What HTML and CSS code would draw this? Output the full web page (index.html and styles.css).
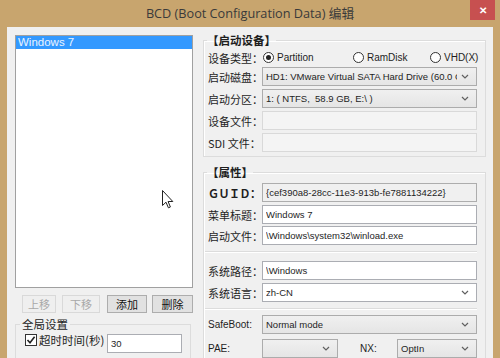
FILE: index.html
```html
<!DOCTYPE html>
<html>
<head>
<meta charset="utf-8">
<link rel="stylesheet" href="styles.css">
</head>
<body>
<div class="app">
  <div class="titlebar">
    <span></span>
    <div class="title">BCD (Boot Configuration Data) 编辑</div>
    <div class="close">✕</div>
  </div>
  <div class="window">
    <div class="left">
      <div class="listbox">
        <div class="item sel">Windows 7</div>
      </div>
      <div class="btnrow">
        <div class="btn dis b1">上移</div>
        <div class="btn dis b2">下移</div>
        <div class="btn b3">添加</div>
        <div class="btn b4">删除</div>
      </div>
      <fieldset class="gbox">
        <legend>全局设置</legend>
        <div class="crow">
          <span class="check"><svg width="10" height="10" viewBox="0 0 10 10"><polyline points="1.5,5 4,7.8 8.6,1.8" fill="none" stroke="#222" stroke-width="1.6"/></svg></span>
          <span class="clabel">超时时间(秒)</span>
          <div class="field white tfield"><span class="val">30</span></div>
        </div>
      </fieldset>
    </div>
    <div class="right">
      <fieldset class="group g1">
        <legend>【启动设备】</legend>
        <div class="row r0">
          <span class="lbl">设备类型：</span>
          <span class="radio on"></span><span class="rtext rt1">Partition</span>
          <span class="radio"></span><span class="rtext rt2">RamDisk</span>
          <span class="radio"></span><span class="rtext">VHD(X)</span>
        </div>
        <div class="row">
          <span class="lbl">启动磁盘：</span>
          <div class="field combo"><span class="val">HD1: VMware Virtual SATA Hard Drive (60.0 GB)</span><svg class="chev" width="8" height="5" viewBox="0 0 8 5"><polyline points="1,1 4,4 7,1" fill="none" stroke="#606060" stroke-width="1.2"/></svg></div>
        </div>
        <div class="row gap3">
          <span class="lbl">启动分区：</span>
          <div class="field combo"><span class="val">1: ( NTFS,&nbsp; 58.9 GB, E:\ )</span><svg class="chev" width="8" height="5" viewBox="0 0 8 5"><polyline points="1,1 4,4 7,1" fill="none" stroke="#606060" stroke-width="1.2"/></svg></div>
        </div>
        <div class="row gap3">
          <span class="lbl">设备文件：</span>
          <div class="field disabled"></div>
        </div>
        <div class="row gap3">
          <span class="lbl">SDI 文件：</span>
          <div class="field disabled"></div>
        </div>
      </fieldset>
      <fieldset class="group g2">
        <legend>【属性】</legend>
        <div class="row">
          <span class="lbl guid">ＧＵＩＤ：</span>
          <div class="field readonly"><span class="val">{cef390a8-28cc-11e3-913b-fe7881134222}</span></div>
        </div>
        <div class="row gap3">
          <span class="lbl">菜单标题：</span>
          <div class="field white"><span class="val">Windows 7</span></div>
        </div>
        <div class="row gap2">
          <span class="lbl">启动文件：</span>
          <div class="field white"><span class="val">\Windows\system32\winload.exe</span></div>
        </div>
        <div class="sep"></div>
        <div class="row gap8">
          <span class="lbl">系统路径：</span>
          <div class="field white"><span class="val">\Windows</span></div>
        </div>
        <div class="row gap3">
          <span class="lbl">系统语言：</span>
          <div class="field white"><span class="val">zh-CN</span><svg class="chev" width="8" height="5" viewBox="0 0 8 5"><polyline points="1,1 4,4 7,1" fill="none" stroke="#606060" stroke-width="1.2"/></svg></div>
        </div>
        <div class="sep"></div>
        <div class="row gap5">
          <span class="lbl en">SafeBoot:</span>
          <div class="field combo"><span class="val">Normal mode</span><svg class="chev" width="8" height="5" viewBox="0 0 8 5"><polyline points="1,1 4,4 7,1" fill="none" stroke="#606060" stroke-width="1.2"/></svg></div>
        </div>
        <div class="row gap5">
          <span class="lbl en">PAE:</span>
          <div class="field combo pae"><span class="val"></span><svg class="chev" width="8" height="5" viewBox="0 0 8 5"><polyline points="1,1 4,4 7,1" fill="none" stroke="#606060" stroke-width="1.2"/></svg></div>
          <span class="lbl en nx">NX:</span>
          <div class="field combo nxsel"><span class="val">OptIn</span><svg class="chev" width="8" height="5" viewBox="0 0 8 5"><polyline points="1,1 4,4 7,1" fill="none" stroke="#606060" stroke-width="1.2"/></svg></div>
        </div>
      </fieldset>
    </div>
  </div>
</div>
<svg class="cursor" width="12" height="19" viewBox="0 0 12 19"><path d="M0.5,0.5 L0.5,15.5 L4,12.2 L6.4,17.8 L8.4,17 L6.1,11.5 L10.8,11.5 Z" fill="#fff" stroke="#222" stroke-width="1" stroke-linejoin="round"/></svg>
</body>
</html>
```

FILE: styles.css
```css
* { box-sizing: border-box; }
html, body { margin: 0; padding: 0; }
body {
  width: 500px;
  height: 358px;
  overflow: hidden;
  background: #c8a56e;
  font-family: "Liberation Sans", "Noto Sans CJK SC", sans-serif;
  font-size: 10px;
  color: #1e1e1e;
  position: relative;
}
.app { width: 500px; height: 358px; display: flex; flex-direction: column; }
.titlebar {
  height: 27px;
  flex: none;
  display: grid;
  grid-template-columns: 1fr auto 1fr;
}
.title {
  font-family: "Open Sans", "Noto Sans CJK SC", sans-serif;
  font-size: 12.7px;
  color: #3a3a3a;
  line-height: 27px;
}
.close {
  justify-self: end;
  align-self: start;
  width: 25px;
  height: 20px;
  margin-right: 5px;
  background: #c75050;
  color: #fff;
  font-size: 10px;
  font-weight: bold;
  display: flex;
  align-items: center;
  justify-content: center;
}
.window {
  margin: 0 7px;
  width: 486px;
  height: 331px;
  flex: none;
  background: #f0f0f0;
  display: flex;
  gap: 7px;
  padding: 8px 7px 0 8px;
  overflow: hidden;
}
.left { width: 178px; flex: none; display: flex; flex-direction: column; }
.left > * { flex: none; }
.listbox {
  height: 253px;
  background: #fff;
  border: 1px solid #a0a0a0;
}
.item {
  height: 13px;
  line-height: 13px;
  padding-left: 2px;
  font-size: 11.5px;
}
.item.sel { background: #3399ff; color: #eaf4ff; }
.btnrow { display: flex; margin-top: 7px; height: 18px; padding-left: 7px; }
.btn {
  height: 18px;
  border: 1px solid #adadad;
  background: #e1e1e1;
  font-family: "Noto Sans CJK SC", sans-serif;
  font-size: 11px;
  line-height: 16px;
  text-align: center;
  color: #111;
}
.btn.dis { border-color: #d9d9d9; background: #efefef; color: #a8a8a8; }
.b1 { width: 34px; }
.b2 { width: 38px; margin-left: 6px; }
.b3 { width: 40px; margin-left: 7px; }
.b4 { width: 41px; margin-left: 5px; }
.gbox {
  margin: 5px 0 0 0;
  padding: 4px 8px 0 9px;
  border: 1px solid #dcdcdc;
  border-bottom: none;
  width: 176px;
  min-width: 0;
  height: 60px;
}
.gbox legend {
  padding: 0 2px;
  margin-left: -5px;
  font-family: "Noto Sans CJK SC", sans-serif;
  font-size: 11.5px;
  line-height: 12px;
  color: #1e1e1e;
}
.crow { display: flex; align-items: flex-start; }
.check {
  width: 12px;
  height: 12px;
  border: 1px solid #333;
  background: #fff;
  display: flex;
  align-items: center;
  justify-content: center;
  flex: none;
}
.clabel {
  font-family: "Noto Sans CJK SC", sans-serif;
  font-size: 11.5px;
  line-height: 12px;
  margin-left: 2px;
  width: 68px;
  flex: none;
}
.tfield { width: 75px; height: 19px; flex: none; }
.right { width: 286px; flex: none; min-width: 0; display: flex; flex-direction: column; }
.right > * { flex: none; }
.group {
  margin: -1px 0 0 3px;
  min-width: 0;
  width: 283px;
  border: 1px solid #dcdcdc;
  box-shadow: inset 1px 1px 0 #fff;
  padding: 2px 8px 4px 4px;
}
.group legend {
  padding: 0;
  margin-left: -1px;
  font-family: "Noto Sans CJK SC", sans-serif;
  font-size: 11.5px;
  font-weight: bold;
  line-height: 12px;
  color: #1e1e1e;
}
.g2 { margin-top: 9px; padding-top: 5px; height: 220px; border-bottom: none; }
.row { display: flex; align-items: center; height: 19px; min-width: 0; }
.gap2 { margin-top: 2px; }
.gap3 { margin-top: 3px; }
.gap5 { margin-top: 5px; }
.gap8 { margin-top: 8px; }
.lbl {
  width: 54px;
  flex: none;
  font-family: "Noto Sans CJK SC", sans-serif;
  font-size: 11px;
  color: #1e1e1e;
  white-space: nowrap;
}
.lbl.guid { font-weight: bold; font-family: "Noto Sans CJK SC", serif; letter-spacing: -0.5px; }
.lbl.en { font-family: "Liberation Sans", sans-serif; font-size: 10px; }
.lbl.nx { width: 37px; margin-left: 22px; }
.r0 .lbl { width: 55px; }
.radio {
  width: 11px;
  height: 11px;
  border: 1px solid #333;
  border-radius: 50%;
  background: #fff;
  flex: none;
  position: relative;
}
.radio.on::after {
  content: "";
  position: absolute;
  left: 2px; top: 2px;
  width: 5px; height: 5px;
  border-radius: 50%;
  background: #222;
}
.rtext { margin-left: 3px; font-size: 10px; flex: none; }
.rt1 { width: 76px; }
.rt2 { width: 63px; }
.field {
  flex: 1 1 0;
  min-width: 0;
  height: 19px;
  border: 1px solid #abadb3;
  background: #fff;
  display: flex;
  align-items: center;
  padding: 0 7px 0 3px;
  overflow: hidden;
}
.field .val { flex: 1 1 0; min-width: 0; white-space: nowrap; overflow: hidden; font-size: 9.5px; }
.field.combo { background: linear-gradient(#f0f0f0, #e5e5e5); border-color: #acacac; }
.field.disabled { background: #f4f4f4; border-color: #d9d9d9; }
.field.readonly { background: #f0f0f0; border-color: #adadad; }
.chev { flex: none; margin-left: 4px; }
.field.pae { flex: none; width: 76px; }
.field.nxsel { flex: none; width: 80px; }
.sep {
  height: 2px;
  margin-top: 6px;
  border-top: 1px solid #dcdcdc;
  border-bottom: 1px solid #fff;
  margin-left: -3px;
}
.cursor { position: absolute; left: 162px; top: 190px; }
```
